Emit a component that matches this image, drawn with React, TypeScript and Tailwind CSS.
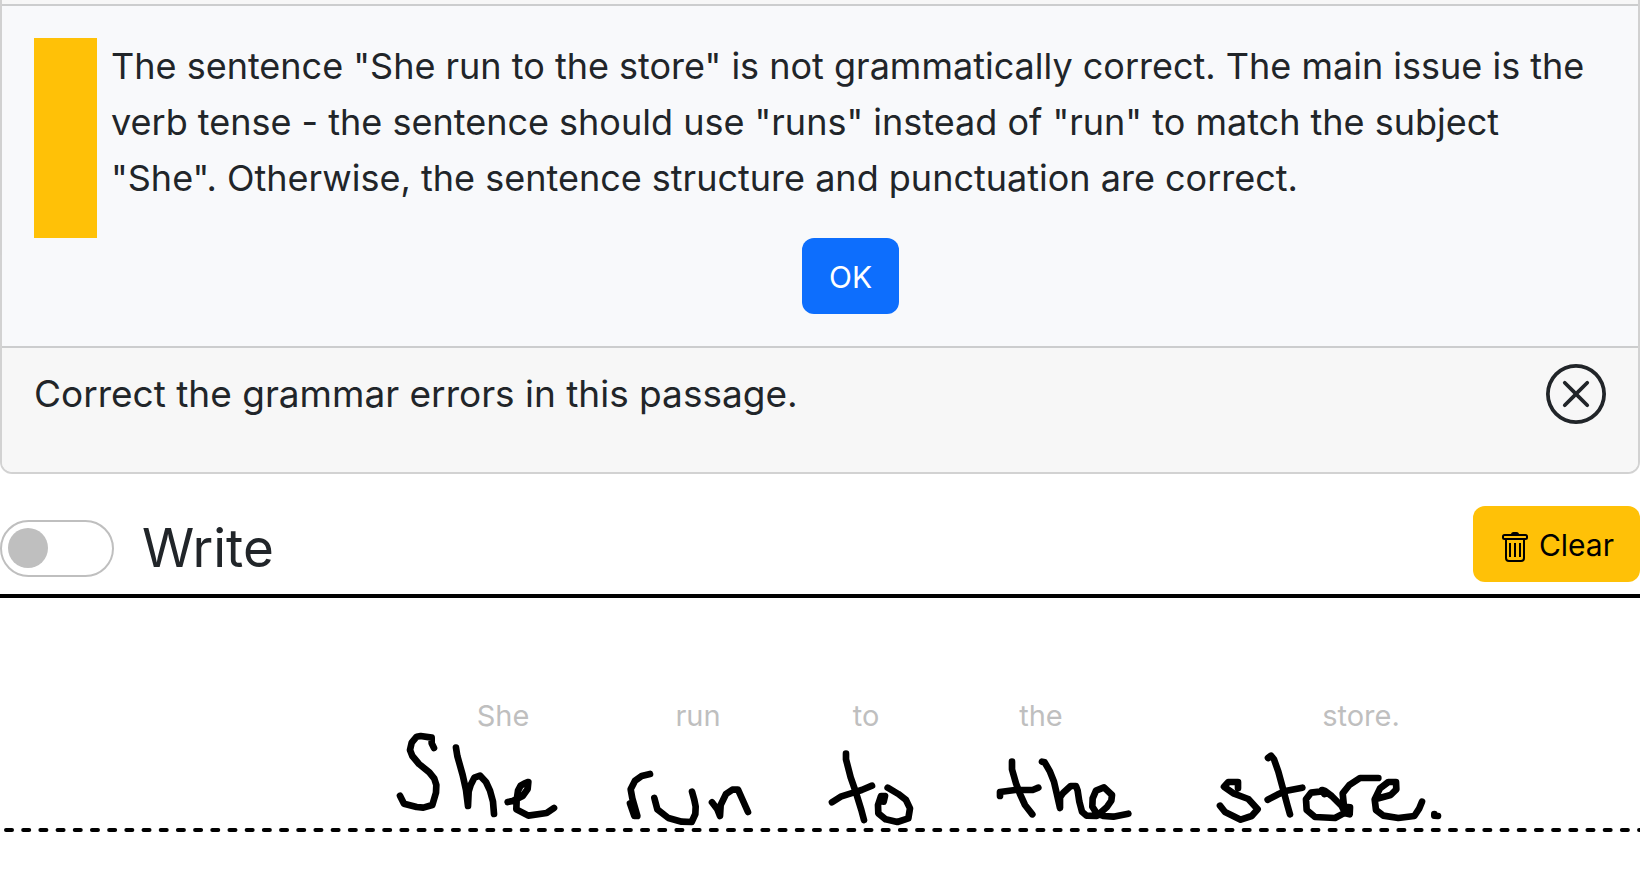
import { BsXCircle } from "react-icons/bs";

type Word = {
  text: string;
  labelX: number;
  x: number;
  strokes: string[];
};

// Stroke points are recorded at 3x, relative to each word's origin
const words: Word[] = [
  {
    text: "She",
    labelX: 503,
    x: 380,
    strokes: [
      "M162 174L155 160L155 143L122 138L110 140L95 158L90 180L97 198L117 222L148 247L163 266L169 285L168 308L157 345L130 353L110 351L72 341L60 317",
      "M228 173L232 198L248 255L258 300L264 348L266 305L272 285L283 263L300 257L318 276L330 302L339 335L342 372",
      "M383 336L398 333L428 318L443 297L445 276L434 280L422 287L414 302L410 330L409 358L445 377L500 369L522 354",
    ],
  },
  {
    text: "run",
    labelX: 698,
    x: 600,
    strokes: [
      "M90 340L103 378L112 378L97 325L92 298L105 272L125 258L150 252",
      "M163 324L172 358L205 384L245 395L275 396L286 372L287 350L283 330L276 305",
      "M336 337L352 358L360 378L362 345L378 312L397 299L414 299L428 330L444 366",
    ],
  },
  {
    text: "to",
    labelX: 866,
    x: 600,
    strokes: [
      "M738 191L738 208L752 262L768 308L784 360L792 390",
      "M696 337L722 320L760 308L785 300L816 287",
      "M851 335L855 318L843 318L834 345L835 370L857 388L892 396L925 385L930 355L918 330L895 312L863 293",
    ],
  },
  {
    text: "the",
    labelX: 1041,
    x: 970,
    strokes: [
      "M126 215L126 238L138 280L150 312L165 345L187 373",
      "M90 318L90 306L135 300L188 300L205 293",
      "M216 215L224 217L240 245L252 275L260 310L270 354L270 322L280 308L302 288L318 288L323 302L328 335L336 365L350 377L380 378L410 352L424 332L426 315L402 292L378 302L368 325L367 350L380 370L400 378L430 380L475 371",
    ],
  },
  {
    text: "store.",
    labelX: 1361,
    x: 1200,
    strokes: [
      "M114 295L114 276L85 276L72 290L100 310L145 327L173 358L155 378L122 389L75 366L60 347",
      "M204 204L213 197L222 208L235 245L250 300L262 345L270 373",
      "M203 329L232 314L260 302L307 293",
      "M373 312L366 300L375 303L395 318L425 348L435 368L405 384L345 381L320 360L318 328L333 308L366 304",
      "M436 370L449 373L450 352L432 350L428 310L448 285L480 264L535 264",
      "M525 328L572 315L589 298L588 276L565 276L540 295L524 328L528 360L550 377L595 384L643 378L658 355L666 335",
      "M703 372L703 377L714 378",
    ],
  },
];

function TrashIcon() {
  return (
    <svg
      className="mt-1 h-8 w-7"
      viewBox="0 0 28 32"
      fill="none"
      stroke="currentColor"
      strokeWidth="2"
      aria-hidden="true"
    >
      <path d="M10 3.5Q10 1 12.500 1H15.500Q18 1 18 3.500Z" fill="currentColor" stroke="none" />
      <rect x="2" y="4" width="24" height="4" rx="1.500" />
      <path d="M5 8V27Q5 30 8 30H20Q23 30 23 27V8" />
      <path d="M9 12V26M14 12V26M19 12V26" />
    </svg>
  );
}

function FeedbackCard() {
  return (
    <section className="overflow-hidden rounded-b-xl border-2 border-t-0 border-black/[.176]">
      <div className="h-1 bg-[#f7f7f7]" />
      <div className="flex items-start border-y-2 border-black/[.176] bg-[#f8f9fb] px-8 py-8">
        <div className="h-[200px] w-[63px] shrink-0 bg-[#ffc107]" />
        <div className="flex min-w-0 flex-1 flex-col items-center gap-8 pl-3.5 pr-4">
          <p className="w-full text-[36px] leading-[56px]">
            The sentence "She run to the store" is not grammatically correct. The main issue is the
            verb tense - the sentence should use "runs" instead of "run" to match the subject
            "She". Otherwise, the sentence structure and punctuation are correct.
          </p>
          <button
            type="button"
            className="h-[76px] rounded-xl bg-[#0d6efd] px-[27px] pt-0.5 text-[30px] text-white"
          >
            OK
          </button>
        </div>
      </div>
      <div className="flex items-start justify-between bg-[#f7f7f7] px-8 pb-12 pt-4">
        <p className="text-[37px] leading-[60px]">Correct the grammar errors in this passage.</p>
        <button type="button" aria-label="Close" className="shrink-0">
          <BsXCircle className="size-[60px]" />
        </button>
      </div>
    </section>
  );
}

function Toolbar() {
  return (
    <div className="flex items-end justify-between border-b-4 border-black pb-3 pt-8">
      <label className="flex items-center gap-7">
        <input
          type="checkbox"
          className="flex h-[57px] w-[114px] appearance-none items-center rounded-full border-2 border-[#bfbfbf] bg-white px-1.5 before:size-10 before:rounded-full before:bg-[#bfbfbf] checked:justify-end"
        />
        <span className="text-[53px] leading-[68px]">Write</span>
      </label>
      <button
        type="button"
        className="flex h-[76px] items-center gap-2.5 rounded-xl bg-[#ffc107] pl-7 pr-[26px] pt-0.5 text-[30px] text-black"
      >
        <TrashIcon />
        Clear
      </button>
    </div>
  );
}

function WritingPad() {
  return (
    <div className="relative h-[293px] overflow-hidden">
      <svg className="block h-full w-full" fill="none" stroke="black" strokeLinecap="round" strokeLinejoin="round">
        <line x1="6" x2="101%" y1="232" y2="232" strokeWidth="4" strokeDasharray="6 11.19" />
        {words.map((word) => (
          <g key={word.text} transform={`translate(${word.x} 92) scale(0.33333)`} strokeWidth="20">
            {word.strokes.map((d) => (
              <path key={d} d={d} />
            ))}
          </g>
        ))}
      </svg>
      {words.map((word) => (
        <span
          key={word.text}
          className="absolute top-[98px] -translate-x-1/2 text-[29px] leading-10 text-[#bfbfbf]"
          style={{ left: word.labelX }}
        >
          {word.text}
        </span>
      ))}
    </div>
  );
}

export default function App() {
  return (
    <main className="bg-white text-[#212529] [font-family:Inter,'Liberation_Sans',sans-serif]">
      <FeedbackCard />
      <Toolbar />
      <WritingPad />
    </main>
  );
}
